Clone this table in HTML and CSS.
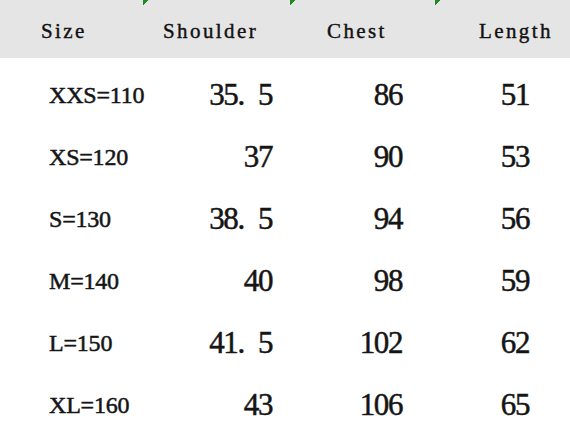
FILE: index.html
```html
<!DOCTYPE html>
<html>
<head>
<meta charset="utf-8">
<link rel="stylesheet" href="styles.css">
</head>
<body>
<div class="table">
  <div class="head">
    <div class="hc c1">Size</div>
    <div class="hc c2 mark">Shoulder</div>
    <div class="hc c3 mark">Chest</div>
    <div class="hc c4 mark">Length</div>
  </div>
  <div class="body">
    <div class="row"><div class="size">XXS=110</div><div class="num n2">35.&ensp;5</div><div class="num n3">86</div><div class="num n4">51</div></div>
    <div class="row"><div class="size">XS=120</div><div class="num n2">37</div><div class="num n3">90</div><div class="num n4">53</div></div>
    <div class="row"><div class="size">S=130</div><div class="num n2">38.&ensp;5</div><div class="num n3">94</div><div class="num n4">56</div></div>
    <div class="row"><div class="size">M=140</div><div class="num n2">40</div><div class="num n3">98</div><div class="num n4">59</div></div>
    <div class="row"><div class="size">L=150</div><div class="num n2">41.&ensp;5</div><div class="num n3">102</div><div class="num n4">62</div></div>
    <div class="row"><div class="size">XL=160</div><div class="num n2">43</div><div class="num n3">106</div><div class="num n4">65</div></div>
  </div>
</div>
</body>
</html>
```
FILE: styles.css
```css
html, body {
  margin: 0;
  padding: 0;
  background: #ffffff;
}
.table {
  width: 570px;
  height: 429px;
  overflow: hidden;
}
.head {
  display: grid;
  grid-template-columns: 143px 147px 145px 135px;
  height: 58px;
  background: #e5e5e5;
}
.hc {
  font-family: "Liberation Serif", "Times New Roman", serif;
  font-size: 21px;
  letter-spacing: 2.4px;
  color: #111;
  padding-top: 20px;
  line-height: 22px;
  -webkit-text-stroke: 0.4px #111;
}
.mark {
  background-image: linear-gradient(to bottom right, #1f8a1f 50%, transparent 50%);
  background-size: 5px 6px;
  background-repeat: no-repeat;
  background-position: 0 0;
}
.c1 { padding-left: 41px; }
.c2 { padding-left: 20px; }
.c3 { padding-left: 37px; }
.c4 { padding-left: 44px; }
.body {
  padding-top: 6px;
}
.row {
  display: grid;
  grid-template-columns: 143px 147px 145px 135px;
  height: 62px;
  align-items: center;
  color: #151515;
  font-family: "Liberation Serif", "Times New Roman", serif;
  -webkit-text-stroke: 0.5px #151515;
}
.size {
  font-size: 24px;
  letter-spacing: -0.2px;
  padding-left: 49px;
}
.num {
  font-size: 31px;
  letter-spacing: -1.4px;
  text-align: right;
}
.n2 { padding-right: 18px; }
.n3 { padding-right: 33px; }
.n4 { padding-right: 41px; }
```
